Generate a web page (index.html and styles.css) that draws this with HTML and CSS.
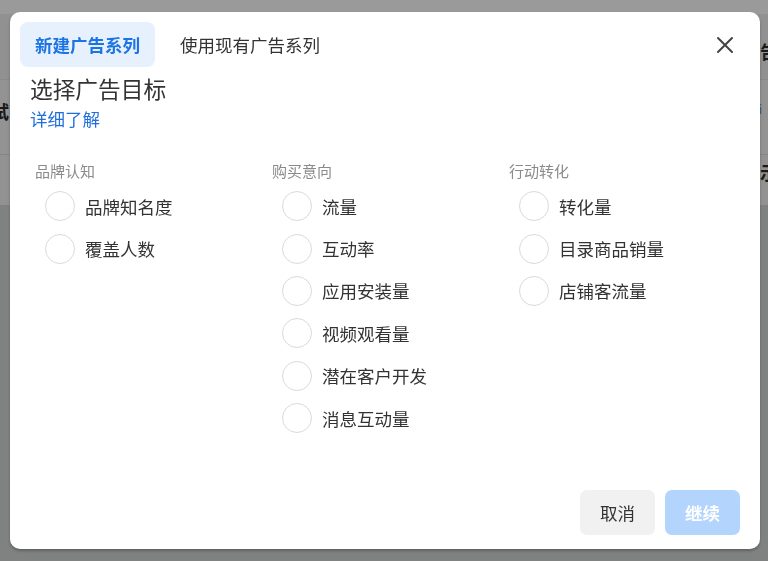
FILE: index.html
```html
<!DOCTYPE html>
<html lang="zh-CN">
<head>
<meta charset="utf-8">
<title>选择广告目标</title>
<link rel="stylesheet" href="styles.css">
</head>
<body>
<div class="page">
  <div class="bg-top"></div>
  <div class="bg-bar">
    <span class="bg-text bg-right-a">告</span>
  </div>
  <div class="bg-sub">
    <span class="bg-text bg-left">试</span>
    <span class="bg-link">i</span>
  </div>
  <div class="bg-row">
    <span class="bg-text bg-right-b">示</span>
  </div>
  <div class="bg-rest"></div>
</div>

<div class="modal">
  <div class="header">
    <div class="tabs">
      <div class="tab active">新建广告系列</div>
      <div class="tab">使用现有广告系列</div>
    </div>
    <div class="close" aria-label="关闭">
      <svg width="18" height="18" viewBox="0 0 18 18"><path d="M2 2 L16 16 M16 2 L2 16" stroke="#444" stroke-width="2" stroke-linecap="round" fill="none"/></svg>
    </div>
  </div>
  <div class="intro">
    <div class="title">选择广告目标</div>
    <a class="link">详细了解</a>
  </div>
  <div class="columns">
    <div class="col">
      <div class="heading">品牌认知</div>
      <div class="opt"><span class="radio"></span><span class="label">品牌知名度</span></div>
      <div class="opt"><span class="radio"></span><span class="label">覆盖人数</span></div>
    </div>
    <div class="col">
      <div class="heading">购买意向</div>
      <div class="opt"><span class="radio"></span><span class="label">流量</span></div>
      <div class="opt"><span class="radio"></span><span class="label">互动率</span></div>
      <div class="opt"><span class="radio"></span><span class="label">应用安装量</span></div>
      <div class="opt"><span class="radio"></span><span class="label">视频观看量</span></div>
      <div class="opt"><span class="radio"></span><span class="label">潜在客户开发</span></div>
      <div class="opt"><span class="radio"></span><span class="label">消息互动量</span></div>
    </div>
    <div class="col">
      <div class="heading">行动转化</div>
      <div class="opt"><span class="radio"></span><span class="label">转化量</span></div>
      <div class="opt"><span class="radio"></span><span class="label">目录商品销量</span></div>
      <div class="opt"><span class="radio"></span><span class="label">店铺客流量</span></div>
    </div>
  </div>
  <div class="footer">
    <button class="btn cancel">取消</button>
    <button class="btn primary">继续</button>
  </div>
</div>
</body>
</html>
```
FILE: styles.css
```css
* { box-sizing: border-box; }
html, body { margin: 0; padding: 0; }
body {
  width: 768px;
  height: 561px;
  overflow: hidden;
  font-family: "Noto Sans CJK SC", "Noto Sans", sans-serif;
  background: #808282;
}
.page {
  display: flex;
  flex-direction: column;
  height: 561px;
}
.bg-top { height: 14px; background: #9a9a9a; }
.bg-bar {
  height: 66px;
  background: #919191;
  border-bottom: 1px solid #8a8a8a;
  display: flex;
  justify-content: flex-end;
  align-items: center;
}
.bg-sub {
  height: 75px;
  background: #939393;
  border-bottom: 1px solid #868686;
  display: flex;
  justify-content: space-between;
  padding-top: 20px;
}
.bg-row {
  height: 50px;
  background: #929292;
  display: flex;
  justify-content: flex-end;
  padding-top: 6px;
}
.bg-rest { flex: 1; background: #808282; }
.bg-text {
  font-size: 18px;
  font-weight: 700;
  color: #1a1a1a;
  line-height: 22px;
}
.bg-left { margin-left: -9px; }
.bg-right-a { margin-right: -10px; margin-top: 8px; }
.bg-right-b { margin-right: -10px; }
.bg-link { color: #2a5a9a; font-size: 12px; margin-right: 6px; }

.modal {
  position: fixed;
  left: 10px;
  top: 12px;
  width: 750px;
  height: 537px;
  background: #fff;
  border-radius: 10px;
  box-shadow: 0 2px 3px rgba(0,0,0,0.25);
  display: flex;
  flex-direction: column;
  color: #333;
}
.header {
  display: flex;
  align-items: center;
  padding: 10px 0 0 10px;
}
.tabs { display: flex; gap: 10px; }
.tab {
  height: 45px;
  line-height: 45px;
  padding: 0 15px;
  font-size: 17.5px;
  border-radius: 8px;
  color: #333;
}
.tab.active {
  background: #e7f0fd;
  color: #1b74e4;
  font-weight: 700;
}
.close {
  margin-left: auto;
  margin-right: 26px;
  width: 18px;
  height: 18px;
  display: flex;
}
.intro {
  padding: 8px 0 0 20px;
  display: flex;
  flex-direction: column;
}
.title {
  font-size: 22.7px;
  line-height: 28px;
  color: #333;
}
.link {
  font-size: 17.5px;
  line-height: 32px;
  color: #216fdb;
  align-self: flex-start;
}
.columns {
  display: grid;
  grid-template-columns: 237px 237px 237px;
  padding: 26px 0 0 25px;
}
.col { display: flex; flex-direction: column; }
.heading {
  font-size: 15px;
  line-height: 20px;
  color: #8a8a8a;
  margin-bottom: 4px;
}
.opt {
  height: 42.4px;
  display: flex;
  align-items: center;
  gap: 10px;
  padding-left: 10px;
}
.radio {
  width: 30px;
  height: 30px;
  border-radius: 50%;
  border: 1px solid #dadada;
  flex: none;
}
.label {
  font-size: 17.5px;
  color: #333;
}
.footer {
  margin-top: auto;
  display: flex;
  justify-content: flex-end;
  gap: 10px;
  padding: 0 20px 14px 0;
}
.btn {
  width: 75px;
  height: 45px;
  border: none;
  border-radius: 7px;
  font-family: inherit;
  font-size: 17.5px;
  padding: 0;
}
.cancel { background: #f1f1f1; color: #333; }
.primary { background: #b3d4fd; color: #fff; font-weight: 700; }
```
